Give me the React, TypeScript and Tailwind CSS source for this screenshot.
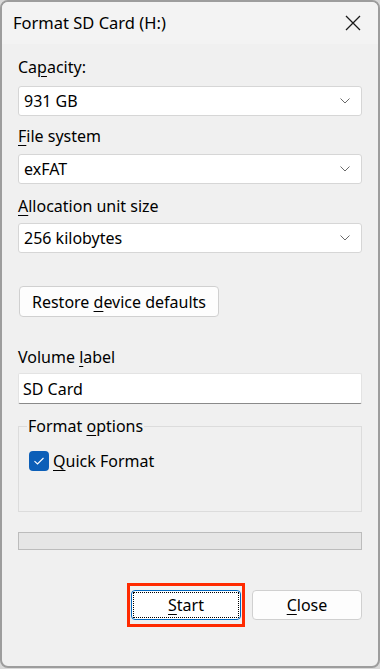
import React from 'react';

const font = { fontFamily: '"Segoe UI", "Noto Sans", sans-serif' };

const Chevron = () => (
    <svg width="12" height="8" viewBox="0 0 12 8" fill="none" stroke="#6a6a6a" strokeWidth="1">
        <path d="M1.5 1.5 L6 6 L10.5 1.5" />
    </svg>
);

const Select = ({ value, className }: { value: string; className: string }) => (
    <div className={`h-[30px] bg-white border border-[#d6d6d6] rounded-[3px] flex items-center justify-between pl-[5px] pr-[10px] ${className}`}>
        <span>{value}</span>
        <Chevron />
    </div>
);

const Label = ({ before, u, after, className }: { before?: string; u: string; after: string; className: string }) => (
    <div className={`h-[20px] leading-[20px] ${className}`}>
        {before}<span className="underline underline-offset-[3px]">{u}</span>{after}
    </div>
);

export default function App() {
    return (
        <div className="w-[380px] h-[669px] bg-[#d9d9d9] text-[16px] text-black" style={font}>
            <div className="w-[380px] h-[668px] border-2 border-[#9d9d9d] rounded-[8px] overflow-hidden bg-[#f0f0f0] flex flex-col">
                {/* TITLE BAR */}
                <div className="h-[42px] bg-[#f3f3f3] flex items-center justify-between pl-[11px] pr-[17px] flex-shrink-0">
                    <span className="leading-[20px] text-[16.5px]">Format SD Card (H:)</span>
                    <svg width="16" height="16" viewBox="0 0 16 16" fill="none" stroke="#1a1a1a" strokeWidth="1.3">
                        <path d="M1 1 L15 15 M15 1 L1 15" />
                    </svg>
                </div>

                {/* BODY */}
                <div className="px-[16px] flex flex-col">
                    <Label before="Ca" u="p" after="acity:" className="mt-[13px]" />
                    <Select value="931 GB" className="mt-[9px]" />

                    <Label u="F" after="ile system" className="mt-[10px]" />
                    <Select value="exFAT" className="mt-[8px]" />

                    <Label u="A" after="llocation unit size" className="mt-[12px]" />
                    <Select value="256 kilobytes" className="mt-[7px]" />

                    <button className="mt-[33px] ml-px w-[200px] h-[31px] bg-[#fdfdfd] border border-[#d0d0d0] rounded-[4px] leading-[20px]">
                        Restore <span className="underline underline-offset-[3px]">d</span>evice defaults
                    </button>

                    <Label before="Volume " u="l" after="abel" className="mt-[30px]" />
                    <div className="mt-[6px] h-[31px] bg-white border border-[#e3e3e3] border-b-[#8a8a8a] rounded-[2px] flex items-center pl-[4px]">
                        SD Card
                    </div>

                    {/* FORMAT OPTIONS */}
                    <fieldset className="mt-[12px] h-[96px] border border-[#dcdcdc] px-[10px]">
                        <legend className="px-[1px] ml-[-2px] leading-[20px]">
                            Format <span className="underline underline-offset-[3px]">o</span>ptions
                        </legend>
                        <div className="mt-[15px] flex items-center gap-[4px]">
                            <div className="w-[20px] h-[20px] rounded-[4px] bg-[#0c5fb8] flex items-center justify-center">
                                <svg width="12" height="10" viewBox="0 0 12 10" fill="none" stroke="#ffffff" strokeWidth="1.1">
                                    <path d="M1.5 5.2 L4.5 8 L10.5 2" />
                                </svg>
                            </div>
                            <span className="leading-[20px]">
                                <span className="underline underline-offset-[3px]">Q</span>uick Format
                            </span>
                        </div>
                    </fieldset>

                    {/* PROGRESS */}
                    <div className="mt-[20px] h-[18px] bg-[#e6e6e6] border border-[#bcbcbc]" />

                    {/* BUTTONS */}
                    <div className="mt-[33px] flex justify-end items-center gap-[7px]">
                        <div className="border-[3px] border-[#ff2a00] px-px py-[4px]">
                            <button className="w-[110px] h-[30px] bg-white border border-[#0067c0] rounded-[4px] p-[1px]">
                                <div className="w-full h-full border border-dotted border-black flex items-center justify-center leading-[20px]">
                                    <span><span className="underline underline-offset-[3px]">S</span>tart</span>
                                </div>
                            </button>
                        </div>
                        <button className="w-[110px] h-[30px] bg-[#fdfdfd] border border-[#d0d0d0] rounded-[4px] leading-[20px]">
                            <span className="underline underline-offset-[3px]">C</span>lose
                        </button>
                    </div>
                </div>
            </div>
        </div>
    );
}
